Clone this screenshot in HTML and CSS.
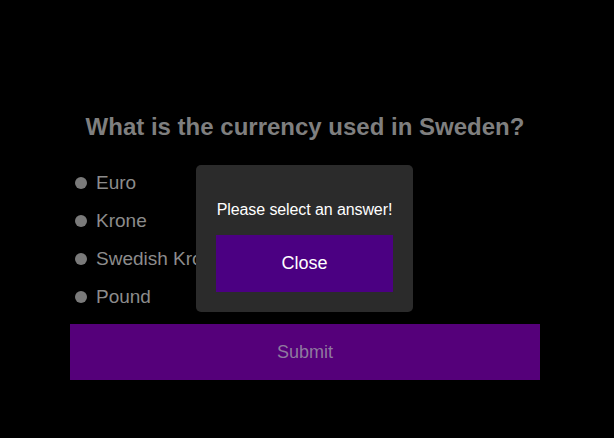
FILE: index.html
```html
<!DOCTYPE html>
<html>
<head>
<meta charset="utf-8">
<link rel="stylesheet" href="styles.css">
</head>
<body>
<div class="quiz">
  <h1 class="question">What is the currency used in Sweden?</h1>
  <ul class="options">
    <li class="option"><span class="radio"></span><span class="label">Euro</span></li>
    <li class="option"><span class="radio"></span><span class="label">Krone</span></li>
    <li class="option"><span class="radio"></span><span class="label">Swedish Krona</span></li>
    <li class="option"><span class="radio"></span><span class="label">Pound</span></li>
  </ul>
  <button class="submit">Submit</button>
</div>
<div class="modal">
  <p class="modal-text">Please select an answer!</p>
  <button class="close">Close</button>
</div>
</body>
</html>
```
FILE: styles.css
```css
html, body {
  margin: 0;
  background: #000;
  height: 100%;
}
body {
  font-family: "Liberation Sans", Arial, sans-serif;
  padding: 0 74px 0 70px;
  position: relative;
}
.quiz {
  padding-top: 113px;
}
.question {
  margin: 0;
  text-align: center;
  font-size: 24px;
  line-height: 28px;
  font-weight: bold;
  color: #7f7f7f;
}
.options {
  list-style: none;
  margin: 23px 0 0;
  padding: 0 0 0 5px;
}
.option {
  display: flex;
  align-items: center;
  height: 38px;
}
.radio {
  width: 12px;
  height: 12px;
  border-radius: 50%;
  background: #7a7a7a;
  margin-right: 9px;
}
.label {
  font-size: 19px;
  color: #8c8c8c;
}
.submit {
  display: block;
  width: 100%;
  height: 56px;
  margin-top: 8px;
  border: 0;
  background: #55007a;
  color: #8f7a9f;
  font-family: inherit;
  font-size: 18px;
}
.modal {
  position: absolute;
  left: 196px;
  top: 165px;
  width: 177px;
  padding: 20px;
  background: #2b2b2b;
  border-radius: 5px;
  text-align: center;
}
.modal-text {
  margin: 16px 0;
  font-size: 16px;
  color: #fff;
  white-space: nowrap;
  letter-spacing: -0.1px;
}
.close {
  display: block;
  width: 100%;
  height: 57px;
  border: 0;
  background: #4b0082;
  color: #fff;
  font-family: inherit;
  font-size: 18px;
}
```
